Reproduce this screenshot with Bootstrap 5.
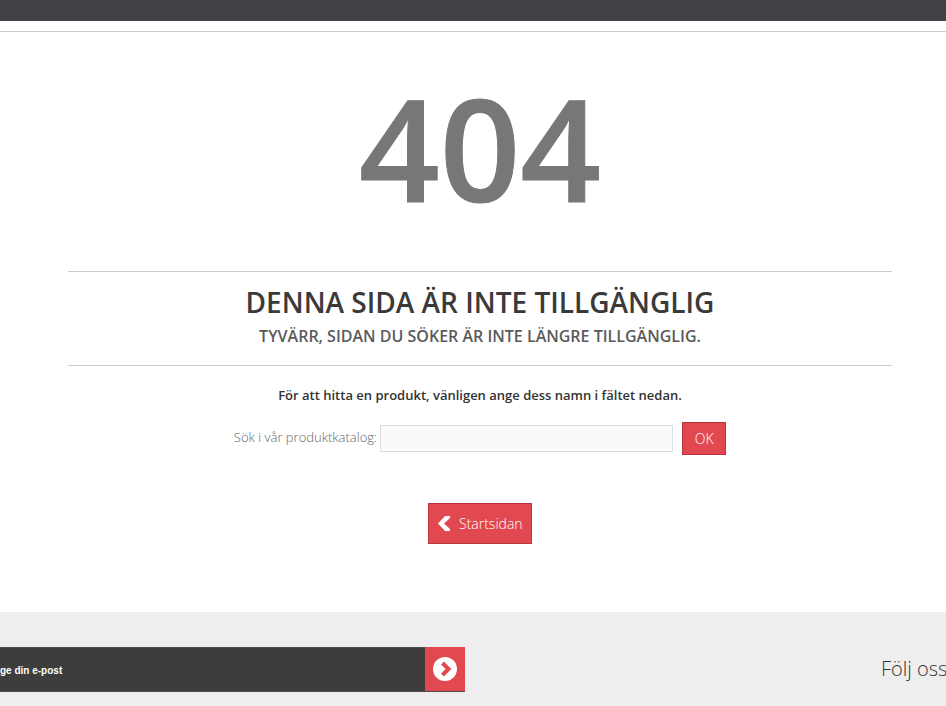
<!DOCTYPE html>
<html lang="sv">
<head>
    <meta charset="UTF-8">
    <title>404</title>
    <link href="https://cdn.jsdelivr.net/npm/bootstrap@5.3.0/dist/css/bootstrap.min.css" rel="stylesheet">
    <style>
        html, body { height: 706px; overflow: hidden; }
        body { font-family: "Open Sans", sans-serif; color: #333; background: #fff; }
        .top-strip { height: 21px; background: #424146; }
        .top-rule { height: 11px; border-bottom: 1px solid #ccc; }
        .big-code { font-size: 141px; line-height: 204px; font-weight: 600; -webkit-text-stroke: 1px #777; color: #777; height: 239px; padding: 13px 0 0 14px; margin: 0; }
        .page-wrap { width: 824px; margin-left: 68px; }
        .msg-box { border-top: 1px solid #ccc; border-bottom: 1px solid #ccc; height: 95px; padding-top: 12px; }
        .msg-title { font-size: 28px; line-height: 36px; font-weight: 600; color: #3a3a3a; margin: 0; }
        .msg-sub { font-size: 16px; line-height: 22px; font-weight: 600; color: #5a5a5a; margin: 5px 0 0; }
        .hint-text { font-size: 13px; line-height: 18px; font-weight: 600; color: #333; margin: 20px 0 0 0; }
        .search-row { margin-top: 18px; height: 33px; }
        .search-label { font-size: 13px; color: #666; font-weight: 300; margin: 0 3px 2px 0; }
        .search-input { width: 293px; height: 27px; border: 1px solid #ddd; background: #fafafa; border-radius: 0; }
        .red-btn { background: #e2484f; border: 1px solid #b8353f; color: #fff; border-radius: 0; font-weight: 300; }
        .ok-btn { width: 44px; height: 33px; font-size: 14px; margin-left: 9px; padding: 0; }
        .home-btn { width: 104px; height: 41px; font-size: 14px; padding: 0 0 0 9px; margin-top: 48px; margin-left: 0; gap: 9px; }
        .foot-area { position: absolute; top: 612px; left: 0; right: 0; height: 94px; background: #eee; overflow: hidden; }
        .news-bar { width: 425px; height: 45px; margin-top: 35px; background: #3e3d3d; border-top: 1px solid #4d4d4d; border-bottom: 1px solid #4d4d4d; color: #fff; font-family: "Liberation Sans", sans-serif; font-size: 10px; font-weight: 700; padding: 1px 0 0 0; overflow: hidden; white-space: nowrap; }
        .news-go { width: 40px; height: 45px; margin-top: 35px; background: #e2484f; border-bottom: 1px solid #4d4d4d; }
        .follow-text { position: absolute; left: 881px; top: 42px; font-size: 20px; font-weight: 300; white-space: nowrap; color: #333; }
    </style>
</head>
<body>
    <div class="top-strip"></div>
    <div class="top-rule"></div>
    <h1 class="big-code text-center">404</h1>
    <div class="page-wrap text-center">
        <div class="msg-box">
            <h2 class="msg-title">DENNA SIDA ÄR INTE TILLGÄNGLIG</h2>
            <h3 class="msg-sub">TYVÄRR, SIDAN DU SÖKER ÄR INTE LÄNGRE TILLGÄNGLIG.</h3>
        </div>
        <p class="hint-text">För att hitta en produkt, vänligen ange dess namn i fältet nedan.</p>
        <div class="search-row d-flex align-items-center justify-content-center">
            <label class="search-label" for="q">Sök i vår produktkatalog:</label>
            <input class="search-input" id="q" type="text">
            <button class="btn red-btn ok-btn" type="button">OK</button>
        </div>
        <button class="btn red-btn home-btn d-inline-flex align-items-center justify-content-start" type="button">
            <svg width="12" height="15" viewBox="0 0 12 15"><path d="M0 7.5 L7 0 L12 0 L12 2 L6 7.5 L12 13 L12 15 L7 15 Z" fill="#fff"/></svg>
            Startsidan
        </button>
    </div>
    <div class="foot-area">
        <div class="d-flex">
            <div class="news-bar d-flex align-items-center">ge din e-post</div>
            <div class="news-go d-flex align-items-center justify-content-center">
                <svg width="24" height="24" viewBox="0 0 24 24"><circle cx="12" cy="12" r="12" fill="#fff"/><path d="M9.5 6 L15.5 12 L9.5 18" fill="none" stroke="#e2484f" stroke-width="4"/></svg>
            </div>
        </div>
        <div class="follow-text">Följ oss</div>
    </div>
    <script src="https://cdn.jsdelivr.net/npm/bootstrap@5.3.0/dist/js/bootstrap.bundle.min.js"></script>
</body>
</html>
